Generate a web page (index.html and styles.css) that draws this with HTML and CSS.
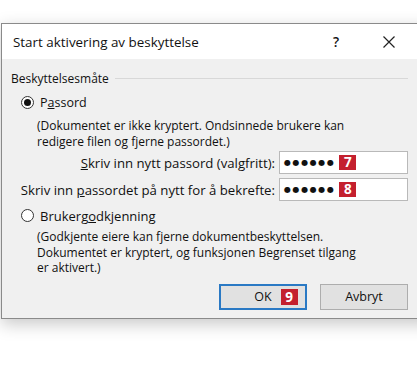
FILE: index.html
```html
<!DOCTYPE html>
<html lang="nb">
<head>
    <meta charset="UTF-8">
    <title>Start aktivering av beskyttelse</title>
    <link rel="stylesheet" href="styles.css">
</head>
<body>
    <div class="dialog">
        <div class="titlebar">
            <span class="title">Start aktivering av beskyttelse</span>
            <span class="help">?</span>
            <svg class="close" width="12" height="12" viewBox="0 0 12 12">
                <path d="M0.5 0.5 L11.5 11.5 M11.5 0.5 L0.5 11.5" stroke="#222" stroke-width="1.2" fill="none"/>
            </svg>
        </div>
        <div class="body">
            <div class="group-head">
                <span>Beskyttelsesmåte</span>
                <div class="rule"></div>
            </div>

            <div class="radio-row">
                <span class="radio checked"></span>
                <span>P<u>a</u>ssord</span>
            </div>
            <div class="desc">
                (Dokumentet er ikke kryptert. Ondsinnede brukere kan<br>
                redigere filen og fjerne passordet.)
            </div>

            <div class="field-row first">
                <label><u>S</u>kriv inn nytt passord (valgfritt):</label>
                <div class="input">
                    <span class="dots">●●●●●●</span>
                    <span class="badge">7</span>
                </div>
            </div>
            <div class="field-row">
                <label>Skriv inn <u>p</u>assordet på nytt for å bekrefte:</label>
                <div class="input">
                    <span class="dots">●●●●●●</span>
                    <span class="badge">8</span>
                </div>
            </div>

            <div class="radio-row second">
                <span class="radio"></span>
                <span>Brukerg<u>o</u>dkjenning</span>
            </div>
            <div class="desc last">
                (Godkjente eiere kan fjerne dokumentbeskyttelsen.<br>
                Dokumentet er kryptert, og funksjonen Begrenset tilgang<br>
                er aktivert.)
            </div>

            <div class="buttons">
                <button class="btn default">OK <span class="badge">9</span></button>
                <button class="btn">Avbryt</button>
            </div>
        </div>
    </div>
</body>
</html>
```

FILE: styles.css
```css
body {
    margin: 0;
    padding: 0;
    background: #fff;
    font-family: "Open Sans", "Noto Sans", Arial, sans-serif;
    font-size: 12px;
    color: #111;
    overflow: hidden;
    height: 367px;
}
.dialog {
    margin: 23px 0 0 1px;
    width: 430px;
    border: 1px solid #8a8a8a;
    background: #f0f0f0;
    box-shadow: 0 5px 16px rgba(0,0,0,0.22);
}
.titlebar {
    height: 35px;
    background: #fff;
    display: flex;
    align-items: center;
    padding-left: 11px;
}
.title {
    font-size: 13.4px;
    width: 320px;
}
.help {
    font-size: 13.5px;
    font-weight: 600;
    width: 50px;
}
.body {
    padding: 11px 0 8px 9px;
    width: 397px;
}
.group-head {
    display: flex;
    align-items: center;
    height: 16px;
}
.rule {
    flex: 1;
    height: 1px;
    background: #d8d8d8;
    margin-left: 6px;
}
.radio-row {
    display: flex;
    align-items: center;
    height: 17px;
    margin-top: 8px;
    margin-left: 10px;
    font-size: 12.5px;
}
.radio-row.second {
    margin-top: 6px;
    font-size: 13px;
}
.radio {
    width: 13px;
    height: 13px;
    border: 1px solid #333;
    border-radius: 50%;
    background: #fff;
    box-sizing: border-box;
    margin-right: 6px;
    display: flex;
    align-items: center;
    justify-content: center;
}
.radio.checked::after {
    content: "";
    width: 7px;
    height: 7px;
    border-radius: 50%;
    background: #111;
}
.desc {
    margin-left: 26px;
    line-height: 15.5px;
    margin-top: 7px;
}
.desc.last {
    margin-top: 5px;
}
.field-row {
    display: flex;
    justify-content: flex-end;
    align-items: center;
    margin-top: 4px;
}
.field-row.first {
    margin-top: 2px;
}
.field-row label {
    font-size: 13.2px;
    margin-right: 4px;
}
.input {
    width: 129px;
    height: 23px;
    box-sizing: border-box;
    border: 1px solid #b9b9b9;
    background: #fff;
    display: flex;
    align-items: center;
    padding-left: 4px;
}
.dots {
    font-family: "DejaVu Sans", sans-serif;
    font-size: 8px;
    letter-spacing: 1.6px;
    margin-right: 4px;
}
.badge {
    display: inline-block;
    background: #c4202e;
    color: #fff;
    font-weight: bold;
    font-size: 13.5px;
    line-height: 15px;
    width: 17px;
    text-align: center;
}
.buttons {
    display: flex;
    justify-content: flex-end;
    gap: 13px;
    margin-top: 8px;
}
.btn {
    width: 88px;
    height: 26px;
    background: #e1e1e1;
    border: 1px solid #adadad;
    font-family: inherit;
    font-size: 12.5px;
    color: #111;
    padding: 0;
}
.btn.default {
    border: 2px solid #2a79c4;
    padding-left: 26px;
    display: flex;
    align-items: center;
    justify-content: center;
}
.btn .badge {
    margin-left: 9px;
    line-height: 16px;
}
```
